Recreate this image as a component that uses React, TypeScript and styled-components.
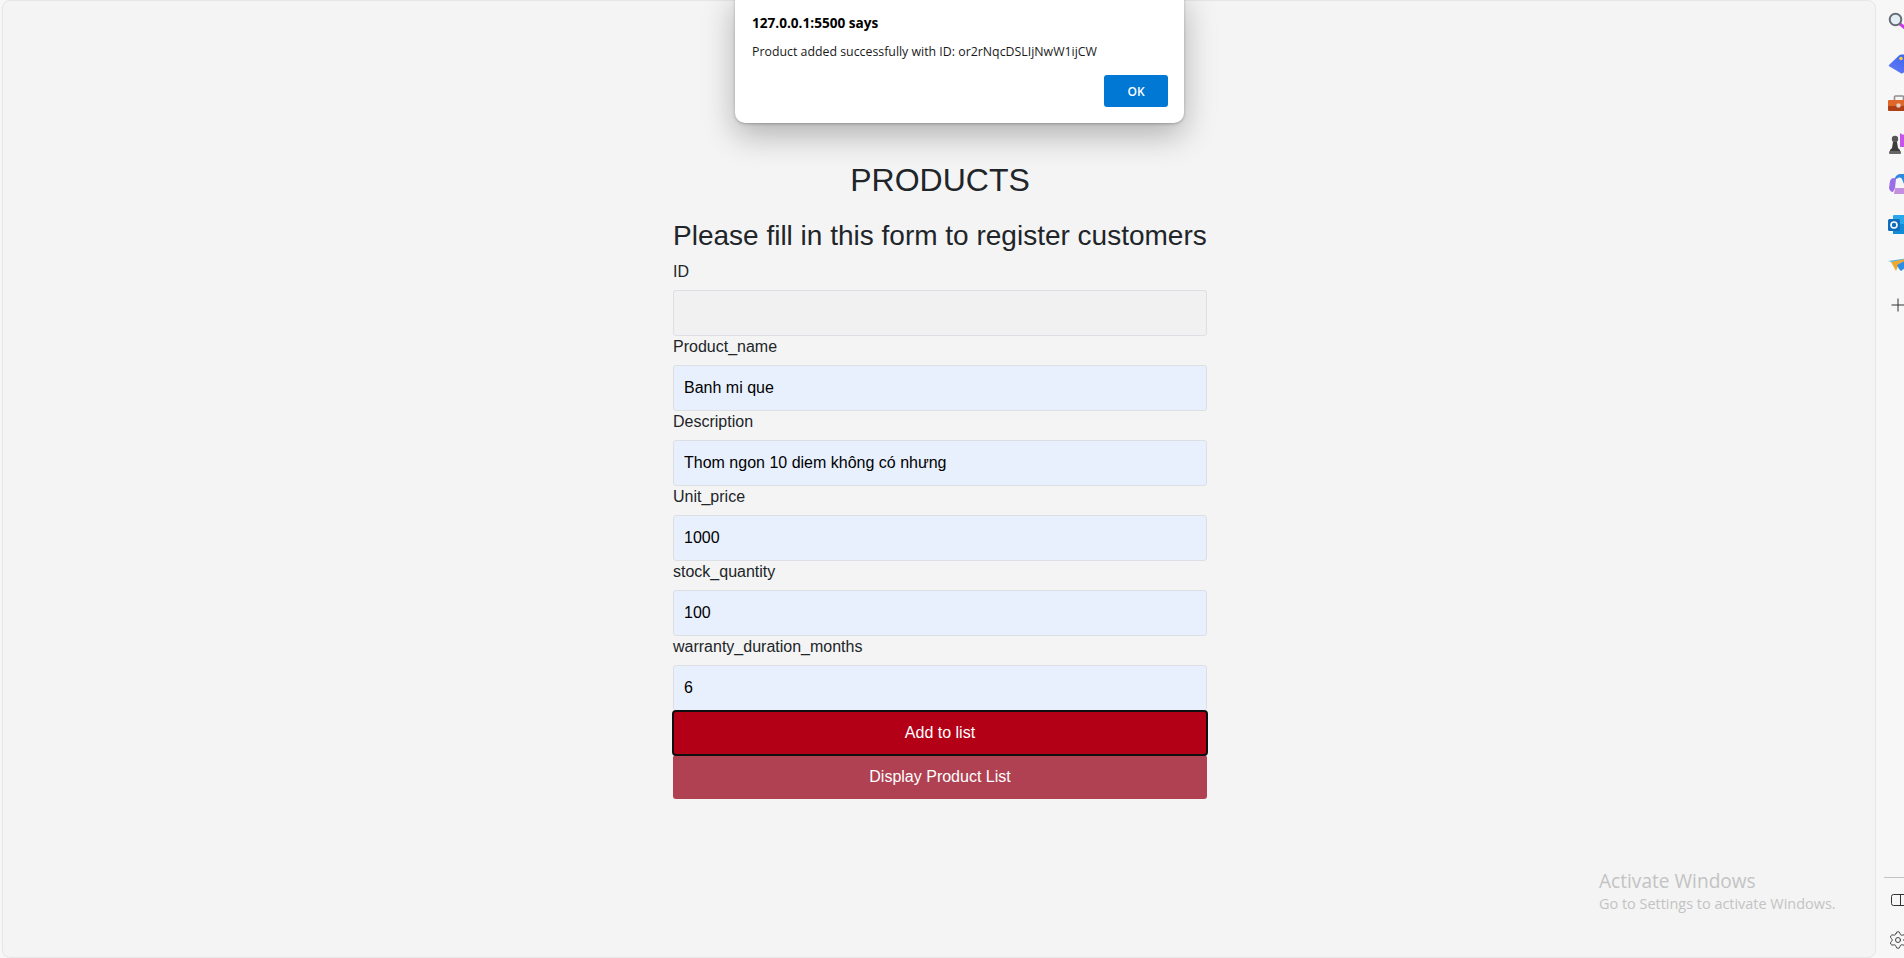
import React from 'react';
import styled, { createGlobalStyle } from 'styled-components';
import { Settings } from 'lucide-react';

const GlobalStyle = createGlobalStyle`
    html, body {
        margin: 0;
        padding: 0;
        height: 100%;
        background-color: #f3f3f3;
        overflow: hidden;
    }
    #root {
        height: 100%;
    }
    * {
        box-sizing: border-box;
    }
`;

// Browser frame
const Frame = styled.div`
    position: relative;
    display: flex;
    width: 1904px;
    height: 958px;
    overflow: hidden;
    background-color: #f7f7f7;
`;
const Viewport = styled.main`
    flex: 1;
    margin-left: 2px;
    padding: 158px 0 0 2px;
    background-color: #f4f4f4;
    border: 1px solid #e6e6e6;
    border-radius: 8px;
    font-family: "Liberation Sans", Arial, sans-serif;
    color: #212529;
`;
const SideRail = styled.aside`
    width: 28px;
    height: 100%;
    padding-top: 3px;
    display: flex;
    flex-direction: column;
    overflow: hidden;
`;
const RailIcon = styled.div<{ $footer?: boolean }>`
    width: 48px;
    height: ${props => (props.$footer ? '36px' : '40.3px')};
    margin-top: ${props => (props.$footer ? '4px' : '0')};
    flex: none;
    padding-left: 12px;
    display: flex;
    align-items: center;
`;
const RailSpacer = styled.div`
    flex: 1;
`;
const RailDivider = styled.div`
    height: 1px;
    margin-left: 8px;
    background-color: #c4c4c4;
    flex: none;
`;

// Form
const Column = styled.div`
    width: 534px;
    margin: 0 auto;
`;
const Title = styled.h1`
    margin: 0 0 15px;
    font-size: 32px;
    font-weight: 400;
    line-height: 42px;
    text-align: center;
`;
const Subtitle = styled.h2`
    margin: 0 0 6px;
    font-size: 28px;
    font-weight: 400;
    line-height: 39px;
    white-space: nowrap;
`;
const Label = styled.label`
    display: block;
    height: 22px;
    margin-bottom: 7px;
    font-size: 16px;
    line-height: 22px;
`;
const Input = styled.input<{ $filled?: boolean }>`
    display: block;
    width: 100%;
    height: 46px;
    padding: 0 10px;
    border: 1px solid #dcdfe3;
    border-radius: 3px;
    outline: none;
    background-color: ${props => (props.$filled ? '#e8f0fe' : '#f1f1f1')};
    color: #000;
    font-family: "Liberation Sans", Arial, sans-serif;
    font-size: 16px;
`;
const Button = styled.button<{ $focused?: boolean }>`
    display: block;
    width: 100%;
    height: 44px;
    border: none;
    border-radius: 3px;
    color: #fff;
    font-family: "Liberation Sans", Arial, sans-serif;
    font-size: 16px;
    background-color: ${props => (props.$focused ? '#b30017' : '#b04152')};
    outline: ${props => (props.$focused ? '2px solid #0f0f0f' : 'none')};
    outline-offset: -1px;
    position: relative;
    z-index: ${props => (props.$focused ? 1 : 0)};
`;

// Alert dialog
const Dialog = styled.div`
    position: absolute;
    top: -10px;
    left: 735px;
    width: 449px;
    height: 133px;
    padding: 24px 16px 0 17px;
    background-color: #fff;
    border-radius: 10px;
    box-shadow: 0 12px 32px rgba(0, 0, 0, .28), 0 1px 3px rgba(0, 0, 0, .25);
    font-family: "Open Sans", "Noto Sans", sans-serif;
    color: #000;
`;
const DialogTitle = styled.div`
    font-size: 13.6px;
    font-weight: 700;
    line-height: 18px;
`;
const DialogMessage = styled.div`
    margin-top: 11px;
    font-size: 12.35px;
    line-height: 17px;
    color: #1a1a1a;
    white-space: nowrap;
`;
const DialogActions = styled.div`
    display: flex;
    justify-content: flex-end;
    margin-top: 15px;
`;
const OkButton = styled.button`
    width: 64px;
    height: 32px;
    padding: 0;
    border: none;
    border-radius: 3px;
    background-color: #0078d4;
    color: #fff;
    font-family: "Open Sans", "Noto Sans", sans-serif;
    font-size: 12px;
    font-weight: 600;
`;

// Watermark
const Watermark = styled.div`
    position: absolute;
    left: 1599px;
    top: 869px;
    color: #c3c3c3;
    font-family: "Open Sans", "Noto Sans", sans-serif;
    pointer-events: none;
`;
const WatermarkTitle = styled.div`
    font-size: 19.1px;
    line-height: 25px;
`;
const WatermarkText = styled.div`
    font-size: 14.45px;
    line-height: 20px;
    white-space: nowrap;
`;

const fields = [
    { label: 'ID', value: '' },
    { label: 'Product_name', value: 'Banh mi que' },
    { label: 'Description', value: 'Thom ngon 10 diem không có nhưng' },
    { label: 'Unit_price', value: '1000' },
    { label: 'stock_quantity', value: '100' },
    { label: 'warranty_duration_months', value: '6' },
];

const SearchIcon = () => (
    <svg width="22" height="22" viewBox="0 0 22 22">
        <path d="M11.500 11.500l9 7.500" stroke="#c93be6" strokeWidth="3" strokeLinecap="round" />
        <circle cx="7.500" cy="7.500" r="5.800" fill="#e3eef5" stroke="#666e75" strokeWidth="2" />
    </svg>
);
const TagIcon = () => (
    <svg width="22" height="22" viewBox="0 0 22 22">
        <defs>
            <linearGradient id="tag" x1="0" y1="1" x2="1" y2="0">
                <stop offset="0" stopColor="#6a7cf5" />
                <stop offset="1" stopColor="#2f62ef" />
            </linearGradient>
        </defs>
        <path d="M1.500 12.500L11 3.500q1-1 2.500-1H24v12l-9 6.500q-1.500 1-2.500 0l-11-6.500q-1.500-1 0-2z" fill="url(#tag)" />
        <circle cx="13" cy="6.500" r="1.800" fill="#f6c945" />
    </svg>
);
const ToolboxIcon = () => (
    <svg width="22" height="22" viewBox="0 0 22 22">
        <path d="M6.500 7V4q0-1 1-1h7q1 0 1 1v3" fill="none" stroke="#8f8f8f" strokeWidth="1.600" />
        <path d="M1 7h22v6H0V8q0-1 1-1z" fill="#e0662a" />
        <path d="M0 13h22v5H1q-1 0-1-1z" fill="#b03f18" />
        <rect x="8.500" y="10.500" width="4" height="4" rx="1" fill="#dcd6d0" />
    </svg>
);
const ChessIcon = () => (
    <svg width="22" height="22" viewBox="0 0 22 22">
        <path d="M12 0l3 2 2-2 2 2 3-2v14H12z" fill="#c653ec" />
        <circle cx="7" cy="6" r="3.200" fill="#555" />
        <path d="M5 9h4l1 6 2 2v1H2v-1l2-2z" fill="#3c3c3c" />
        <rect x="1" y="18" width="12" height="3" rx="1" fill="#666" />
    </svg>
);
const CopilotIcon = () => (
    <svg width="22" height="22" viewBox="0 0 22 22">
        <path d="M8 3q2-2 4-2h4q2 0 3 3l3 7-6 0-2-5q-1-2-3-1.500L6 7z" fill="#2f88e0" />
        <path d="M2 8q1-3 4-3l2 1-1 9-2 4q-3 0-4-4z" fill="#9a6ee8" />
        <path d="M7 15h9l6-4-1 6q-1 4-4 4H6z" fill="#c58fdf" />
        <circle cx="11.500" cy="11" r="3.600" fill="#f4f4f4" />
    </svg>
);
const OutlookIcon = () => (
    <svg width="22" height="22" viewBox="0 0 22 22">
        <rect x="5" y="1" width="17" height="19" rx="1" fill="#28a8ea" />
        <rect x="5" y="10" width="17" height="10" fill="#0f8bd8" />
        <rect x="0" y="5" width="12" height="12" rx="1.500" fill="#0f6cbd" />
        <circle cx="6" cy="11" r="3" fill="none" stroke="#fff" strokeWidth="1.600" />
    </svg>
);
const PlaneIcon = () => (
    <svg width="22" height="22" viewBox="0 0 22 22">
        <path d="M0 7l22-3-11 6z" fill="#4cb4f0" />
        <path d="M3 8l5 9 3-7 11-6z" fill="#f0a92e" />
        <path d="M9 11l13-7v13l-5-3-4 3-2-2z" fill="#2d8fe4" />
    </svg>
);
const PlusIcon = () => (
    <svg width="22" height="22" viewBox="0 0 22 22">
        <path d="M3.500 11h13M10 4.500v13" stroke="#333" strokeWidth="1" />
    </svg>
);
const PanelIcon = () => (
    <svg width="22" height="22" viewBox="0 0 22 22">
        <rect x="3.500" y="5.500" width="19" height="11" rx="2" fill="none" stroke="#333" strokeWidth="1" />
        <path d="M12.500 5.500v11" stroke="#333" strokeWidth="1" />
    </svg>
);

const App: React.FC = () => {
    return <>
        <GlobalStyle />
        <Frame>
            <Viewport>
                <Column>
                    <Title>PRODUCTS</Title>
                    <Subtitle>Please fill in this form to register customers</Subtitle>
                    {fields.map(field => (
                        <React.Fragment key={field.label}>
                            <Label>{field.label}</Label>
                            <Input $filled={field.value !== ''} defaultValue={field.value} />
                        </React.Fragment>
                    ))}
                    <Button $focused>Add to list</Button>
                    <Button>Display Product List</Button>
                </Column>
            </Viewport>
            <SideRail>
                <RailIcon><SearchIcon /></RailIcon>
                <RailIcon><TagIcon /></RailIcon>
                <RailIcon><ToolboxIcon /></RailIcon>
                <RailIcon><ChessIcon /></RailIcon>
                <RailIcon><CopilotIcon /></RailIcon>
                <RailIcon><OutlookIcon /></RailIcon>
                <RailIcon><PlaneIcon /></RailIcon>
                <RailIcon><PlusIcon /></RailIcon>
                <RailSpacer />
                <RailDivider />
                <RailIcon $footer><PanelIcon /></RailIcon>
                <RailIcon $footer><Settings size={20} strokeWidth={1.1} color="#333" /></RailIcon>
            </SideRail>
            <Dialog>
                <DialogTitle>127.0.0.1:5500 says</DialogTitle>
                <DialogMessage>Product added successfully with ID: or2rNqcDSLIjNwW1ijCW</DialogMessage>
                <DialogActions>
                    <OkButton>OK</OkButton>
                </DialogActions>
            </Dialog>
            <Watermark>
                <WatermarkTitle>Activate Windows</WatermarkTitle>
                <WatermarkText>Go to Settings to activate Windows.</WatermarkText>
            </Watermark>
        </Frame>
    </>;
};

export default App;
